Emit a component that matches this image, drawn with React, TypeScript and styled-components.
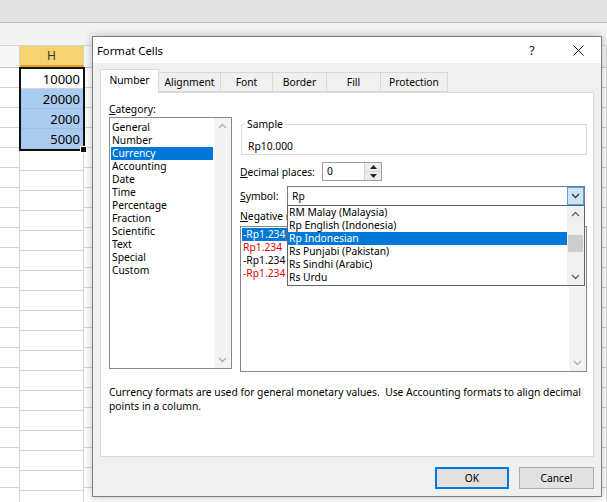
import React from "react";
import styled, { createGlobalStyle } from "styled-components";

const GlobalStyle = createGlobalStyle`
  html, body {
    margin: 0;
    padding: 0;
  }
  body {
    font-family: "Noto Sans", "Open Sans", sans-serif;
    font-size: 10.3px;
    color: #000;
  }
`;

const Sheet = styled.div`
  position: relative;
  width: 607px;
  height: 502px;
  overflow: hidden;
  background: #fff;
  display: flex;
  flex-direction: column;
`;

const Ribbon = styled.div`
  height: 22px;
  flex: none;
  background: #e1e1e1;
  border-bottom: 1px solid #bdbdbd;
`;

const FormulaBar = styled.div`
  height: 22px;
  flex: none;
  background: #f3f3f3;
  border-bottom: 1px solid #d6d6d6;
`;

const HeaderRow = styled.div`
  display: flex;
  height: 21px;
  flex: none;
  background: #f6f6f6;
  border-bottom: 1px solid #c8c8c8;
`;

const ColHead = styled.div<{ $w?: number; $active?: boolean }>`
  width: ${(p) => (p.$w ? `${p.$w}px` : "auto")};
  flex: ${(p) => (p.$w ? "none" : 1)};
  box-sizing: border-box;
  border-right: 1px solid #d4d4d4;
  background: ${(p) => (p.$active ? "#f6d36f" : "transparent")};
  border-bottom: ${(p) => (p.$active ? "2px solid #e0a526" : "none")};
  display: flex;
  align-items: center;
  justify-content: center;
  font-size: 12px;
  color: #333;
`;

const Body = styled.div`
  display: flex;
  flex: 1;
`;

const Column = styled.div<{ $w?: number }>`
  width: ${(p) => (p.$w ? `${p.$w}px` : "auto")};
  flex: ${(p) => (p.$w ? "none" : 1)};
  display: flex;
  flex-direction: column;
  box-sizing: border-box;
  border-right: 1px solid #d4d4d4;
`;

const Cell = styled.div<{ $sel?: boolean }>`
  height: 20px;
  flex: none;
  box-sizing: border-box;
  border-bottom: 1px solid ${(p) => (p.$sel ? "#9fbfe3" : "#d4d4d4")};
  background: ${(p) => (p.$sel ? "#a9cbef" : "transparent")};
  text-align: right;
  padding-right: 3px;
  font-size: 13px;
  line-height: 20px;
`;

const Selection = styled.div`
  position: relative;
  margin: -1px -2px 0 -1px;
  border: 2px solid #111;
  display: flex;
  flex-direction: column;
  &::after {
    content: "";
    position: absolute;
    right: -4px;
    bottom: -4px;
    width: 5px;
    height: 5px;
    background: #111;
    border: 1px solid #fff;
  }
`;

/* ---------- dialog ---------- */

const Dialog = styled.div`
  position: absolute;
  left: 92px;
  top: 36px;
  width: 510px;
  height: 461px;
  box-sizing: border-box;
  border: 1px solid #7f7f7f;
  box-shadow: 0 0 8px rgba(0, 0, 0, 0.25);
  background: #f0f0f0;
  display: flex;
  flex-direction: column;
`;

const TitleBar = styled.div`
  height: 26px;
  flex: none;
  background: #fff;
  display: flex;
  align-items: center;
`;

const Title = styled.div`
  flex: 1;
  padding-left: 4px;
  font-size: 11.3px;
`;

const TitleButton = styled.div`
  width: 46px;
  height: 26px;
  display: flex;
  align-items: center;
  justify-content: center;
  font-size: 12.5px;
  color: #111;
`;

const DialogBody = styled.div`
  flex: 1;
  display: flex;
  flex-direction: column;
  padding: 6px 7px 0 7px;
`;

const TabRow = styled.div`
  display: flex;
  align-items: flex-end;
  height: 23px;
  position: relative;
  z-index: 1;
`;

const Tab = styled.div<{ $w: number; $active?: boolean }>`
  width: ${(p) => p.$w}px;
  height: ${(p) => (p.$active ? 24 : 20)}px;
  box-sizing: border-box;
  margin-left: -1px;
  margin-bottom: ${(p) => (p.$active ? -1 : 0)}px;
  border: 1px solid #d9d9d9;
  border-bottom: ${(p) => (p.$active ? "none" : "1px solid #d9d9d9")};
  background: ${(p) => (p.$active ? "#fff" : "#f0f0f0")};
  display: flex;
  align-items: center;
  justify-content: center;
  padding-bottom: ${(p) => (p.$active ? 3 : 0)}px;
  &:first-child {
    margin-left: 0;
  }
`;

const Panel = styled.div`
  position: relative;
  height: 365px;
  flex: none;
  box-sizing: border-box;
  background: #fff;
  border: 1px solid #d9d9d9;
  padding: 9px 6px 0 8px;
`;

const Columns = styled.div`
  display: grid;
  grid-template-columns: 123px 1fr;
  column-gap: 8px;
`;

const RightColumn = styled.div`
  display: flex;
  flex-direction: column;
`;

const Label = styled.div<{ $w?: number }>`
  height: 14px;
  line-height: 14px;
  white-space: nowrap;
  flex: none;
  width: ${(p) => (p.$w ? `${p.$w}px` : "auto")};
  u {
    text-decoration: underline;
    text-underline-offset: 1px;
  }
`;

const ListBox = styled.div<{ $h: number; $top: number; $padTop: number }>`
  position: relative;
  height: ${(p) => p.$h}px;
  margin-top: ${(p) => p.$top}px;
  box-sizing: border-box;
  border: 1px solid #828790;
  padding: ${(p) => p.$padTop}px 18px 0 1px;
  overflow: hidden;
`;

const Item = styled.div<{ $sel?: boolean; $red?: boolean }>`
  height: 13px;
  line-height: 13px;
  padding-left: 1px;
  white-space: nowrap;
  color: ${(p) => (p.$sel ? "#fff" : p.$red ? "#e00000" : "#000")};
  background: ${(p) => (p.$sel ? "#0078d7" : "transparent")};
`;

const ScrollTrack = styled.div<{ $bg?: string }>`
  position: absolute;
  top: 0;
  right: 0;
  bottom: 0;
  width: 17px;
  background: ${(p) => p.$bg || "#f3f3f3"};
  display: flex;
  flex-direction: column;
  justify-content: space-between;
  align-items: center;
  padding: 5px 0;
  box-sizing: border-box;
`;

const Thumb = styled.div`
  position: absolute;
  left: 1px;
  right: 1px;
  top: 29px;
  height: 17px;
  background: #cdcdcd;
`;

const GroupBox = styled.div`
  margin: 22px 0 0 1px;
  height: 31px;
  box-sizing: border-box;
  border: 1px solid #dcdcdc;
  padding: 0 7px 0 6px;
`;

const Legend = styled.div`
  display: inline-block;
  margin: -8px 0 0 -3px;
  padding: 0 2px;
  background: #fff;
  line-height: 14px;
  vertical-align: top;
`;

const SampleValue = styled.div`
  line-height: 14px;
`;

const FormRow = styled.div<{ $top: number }>`
  display: flex;
  align-items: center;
  margin-top: ${(p) => p.$top}px;
`;

const Spin = styled.div`
  width: 60px;
  height: 19px;
  box-sizing: border-box;
  border: 1px solid #a0a0a0;
  display: flex;
`;

const SpinValue = styled.div`
  flex: 1;
  padding-left: 4px;
  line-height: 17px;
`;

const SpinButtons = styled.div`
  width: 16px;
  display: flex;
  flex-direction: column;
  border-left: 1px solid #d0d0d0;
  background: #ececec;
`;

const SpinButton = styled.div`
  flex: 1;
  display: flex;
  align-items: center;
  justify-content: center;
  border-bottom: 1px solid #d8d8d8;
  &:last-child {
    border-bottom: none;
  }
`;

const Combo = styled.div`
  position: relative;
  width: 298px;
  height: 20px;
  box-sizing: border-box;
  border: 1px solid #7a7a7a;
  display: flex;
  align-items: center;
  padding-left: 4px;
`;

const ComboButton = styled.div`
  position: absolute;
  right: 0;
  top: 0;
  bottom: 0;
  width: 17px;
  box-sizing: border-box;
  background: #cce4f7;
  border: 1px solid #569de5;
  display: flex;
  align-items: center;
  justify-content: center;
`;

const Dropdown = styled.div`
  position: absolute;
  left: -1px;
  top: 18px;
  z-index: 2;
  width: 298px;
  height: 81px;
  box-sizing: border-box;
  background: #fff;
  border: 1px solid #646464;
  padding: 0 17px 0 0;
`;

const Description = styled.div`
  margin-top: 13px;
  line-height: 14px;
  width: 480px;
`;

const Footer = styled.div`
  display: flex;
  justify-content: flex-end;
  gap: 10px;
  padding-top: 10px;
`;

const Button = styled.div<{ $primary?: boolean }>`
  width: ${(p) => (p.$primary ? 74 : 75)}px;
  height: 22px;
  box-sizing: border-box;
  background: #e1e1e1;
  border: ${(p) => (p.$primary ? "2px solid #0078d7" : "1px solid #adadad")};
  display: flex;
  align-items: center;
  justify-content: center;
`;

const Chevron = ({ up, color = "#8a8a8a" }: { up?: boolean; color?: string }) => (
  <svg width="9" height="6" viewBox="0 0 9 6">
    <polyline
      points={up ? "1,5 4.5,1.5 8,5" : "1,1 4.5,4.5 8,1"}
      fill="none"
      stroke={color}
      strokeWidth="1.3"
    />
  </svg>
);

const Tri = ({ up }: { up?: boolean }) => (
  <svg width="7" height="4" viewBox="0 0 7 4">
    <polygon points={up ? "0,4 3.5,0 7,4" : "0,0 7,0 3.5,4"} fill="#222" />
  </svg>
);

const values = ["10000", "20000", "2000", "5000"];
const ROWS = 22;

const categories = [
  "General",
  "Number",
  "Currency",
  "Accounting",
  "Date",
  "Time",
  "Percentage",
  "Fraction",
  "Scientific",
  "Text",
  "Special",
  "Custom",
];

const negatives = [
  { text: "-Rp1.234", sel: true },
  { text: "Rp1.234", red: true },
  { text: "-Rp1.234" },
  { text: "-Rp1.234", red: true },
];

const symbols = [
  "RM Malay (Malaysia)",
  "Rp English (Indonesia)",
  "Rp Indonesian",
  "Rs Punjabi (Pakistan)",
  "Rs Sindhi (Arabic)",
  "Rs Urdu",
];

const tabs = [
  { name: "Number", w: 59 },
  { name: "Alignment", w: 63 },
  { name: "Font", w: 53 },
  { name: "Border", w: 55 },
  { name: "Fill", w: 55 },
  { name: "Protection", w: 68 },
];

export default function App() {
  return (
    <>
      <GlobalStyle />
      <Sheet>
        <Ribbon />
        <FormulaBar />
        <HeaderRow>
          <ColHead $w={20} />
          <ColHead $w={64} $active>
            H
          </ColHead>
          <ColHead />
        </HeaderRow>
        <Body>
          <Column $w={20}>
            {Array.from({ length: ROWS }, (_, i) => (
              <Cell key={i} />
            ))}
          </Column>
          <Column $w={64}>
            <Selection>
              {values.map((v, i) => (
                <Cell key={v} $sel={i > 0}>
                  {v}
                </Cell>
              ))}
            </Selection>
            {Array.from({ length: ROWS - 4 }, (_, i) => (
              <Cell key={i} />
            ))}
          </Column>
          <Column>
            {Array.from({ length: ROWS }, (_, i) => (
              <Cell key={i} />
            ))}
          </Column>
        </Body>

        <Dialog>
          <TitleBar>
            <Title>Format Cells</Title>
            <TitleButton>?</TitleButton>
            <TitleButton>
              <svg width="11" height="11" viewBox="0 0 11 11">
                <path d="M0.5 0.5 L10.5 10.5 M10.5 0.5 L0.5 10.5" stroke="#111" strokeWidth="1" />
              </svg>
            </TitleButton>
          </TitleBar>
          <DialogBody>
            <TabRow>
              {tabs.map((t, i) => (
                <Tab key={t.name} $w={t.w} $active={i === 0}>
                  {t.name}
                </Tab>
              ))}
            </TabRow>
            <Panel>
              <Columns>
                <div>
                  <Label>
                    <u>C</u>ategory:
                  </Label>
                  <ListBox $h={252} $top={1} $padTop={3}>
                    {categories.map((c) => (
                      <Item key={c} $sel={c === "Currency"}>
                        {c}
                      </Item>
                    ))}
                    <ScrollTrack>
                      <Chevron up color="#b0b0b0" />
                      <Chevron color="#b0b0b0" />
                    </ScrollTrack>
                  </ListBox>
                </div>
                <RightColumn>
                  <GroupBox>
                    <Legend>Sample</Legend>
                    <SampleValue>Rp10.000</SampleValue>
                  </GroupBox>
                  <FormRow $top={7}>
                    <Label $w={82}>
                      <u>D</u>ecimal places:
                    </Label>
                    <Spin>
                      <SpinValue>0</SpinValue>
                      <SpinButtons>
                        <SpinButton>
                          <Tri up />
                        </SpinButton>
                        <SpinButton>
                          <Tri />
                        </SpinButton>
                      </SpinButtons>
                    </Spin>
                  </FormRow>
                  <FormRow $top={5}>
                    <Label $w={47}>
                      <u>S</u>ymbol:
                    </Label>
                    <Combo>
                      Rp
                      <ComboButton>
                        <Chevron color="#333" />
                      </ComboButton>
                      <Dropdown>
                        {symbols.map((s) => (
                          <Item key={s} $sel={s === "Rp Indonesian"}>
                            {s}
                          </Item>
                        ))}
                        <ScrollTrack $bg="#f0f0f0">
                          <Chevron up color="#606060" />
                          <Chevron color="#606060" />
                          <Thumb />
                        </ScrollTrack>
                      </Dropdown>
                    </Combo>
                  </FormRow>
                  <Label style={{ marginTop: 3 }}>
                    <u>N</u>egative numbers:
                  </Label>
                  <ListBox $h={146} $top={3} $padTop={1}>
                    {negatives.map((n, i) => (
                      <Item key={i} $sel={n.sel} $red={n.red}>
                        {n.text}
                      </Item>
                    ))}
                    <ScrollTrack>
                      <span />
                      <Chevron color="#b0b0b0" />
                    </ScrollTrack>
                  </ListBox>
                </RightColumn>
              </Columns>
              <Description>
                Currency formats are used for general monetary values.&nbsp; Use Accounting formats to
                align decimal points in a column.
              </Description>
            </Panel>
            <Footer>
              <Button $primary>OK</Button>
              <Button>Cancel</Button>
            </Footer>
          </DialogBody>
        </Dialog>
      </Sheet>
    </>
  );
}
